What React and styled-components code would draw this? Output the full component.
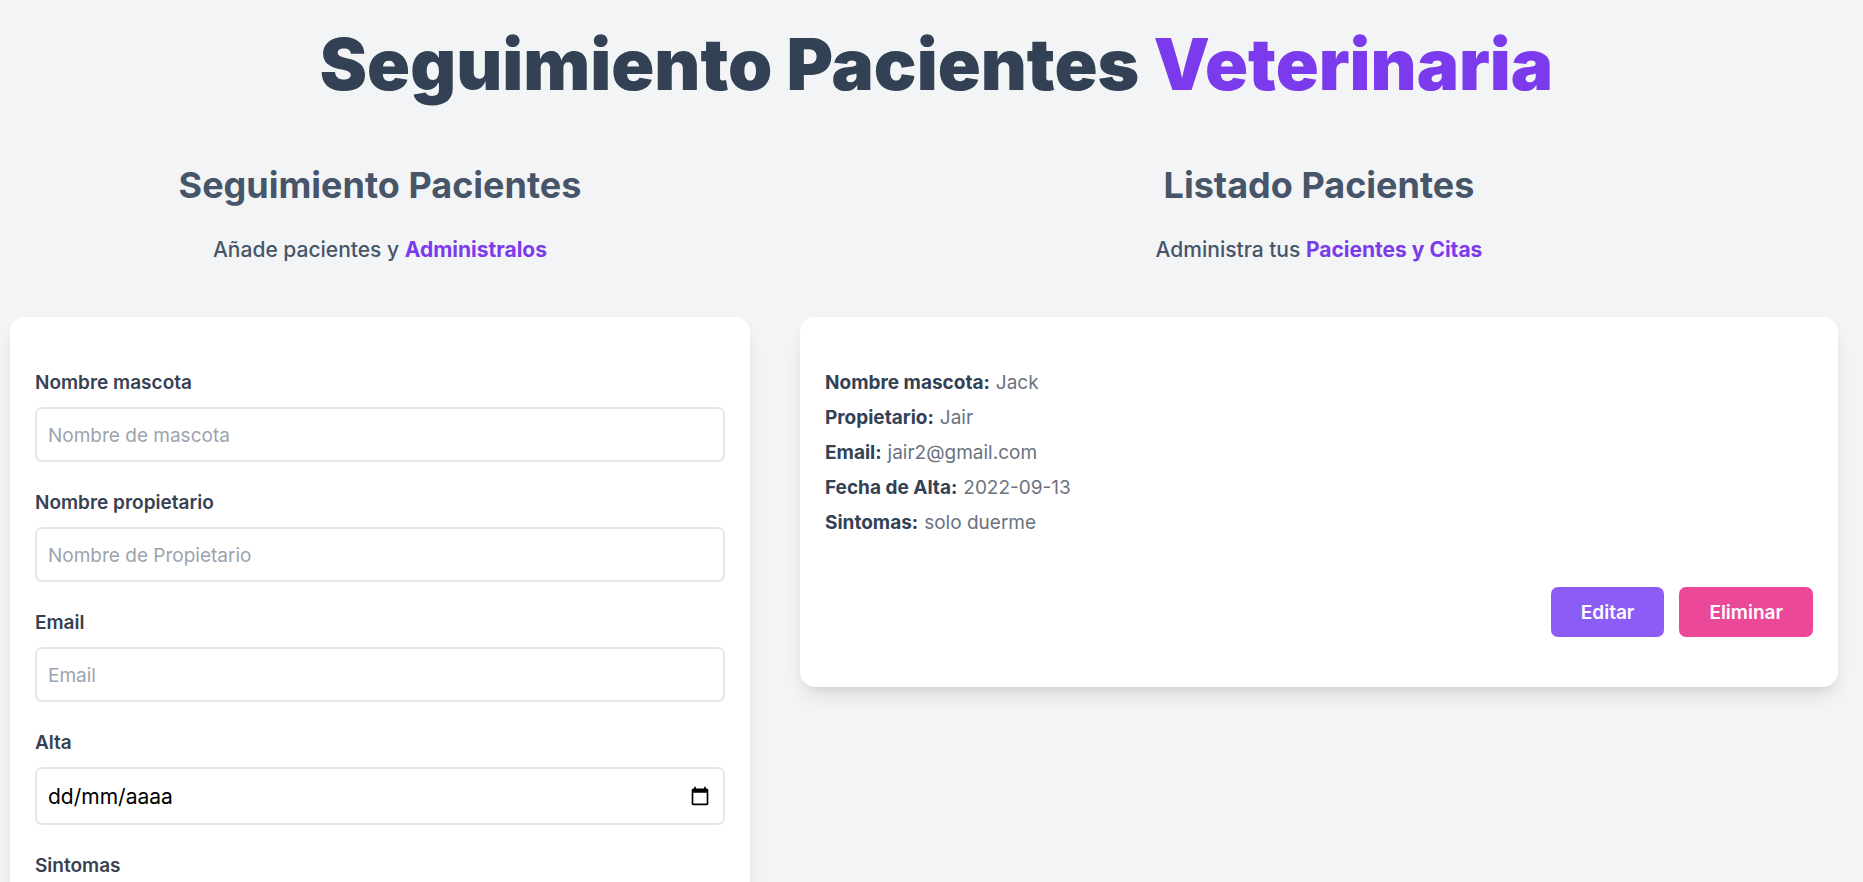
import React from "react";
import styled, { createGlobalStyle } from "styled-components";

const GlobalStyle = createGlobalStyle`
  *, *::before, *::after {
    box-sizing: border-box;
  }

  html {
    scrollbar-width: none;
  }

  body {
    margin: 0;
    background: #f3f4f6;
    font-family: "Inter", "Liberation Sans", sans-serif;
    font-size: 19px;
    line-height: 32px;
    color: #000;
  }

  h1, h2, p, dl, dd {
    margin: 0;
  }

  button, input, textarea {
    font: inherit;
  }
`;

const Page = styled.div`
  padding: 25px 0 50px 10px;
`;

const Title = styled.h1`
  font-size: 71px;
  font-weight: 900;
  line-height: 78px;
  text-align: center;
  color: #334155;
`;

const Accent = styled.span`
  color: #7c3aed;
  font-weight: ${(props) => props.$weight || "inherit"};
`;

const Columns = styled.main`
  display: grid;
  grid-template-columns: minmax(0, 740fr) minmax(0, 1038fr);
  gap: 50px;
  align-items: start;
  margin-top: 59px;
  margin-right: 25px;

  @media (max-width: 800px) {
    grid-template-columns: minmax(0, 1fr);
    margin-right: 10px;
  }
`;

const Heading = styled.h2`
  font-size: 36px;
  font-weight: 700;
  line-height: 47px;
  text-align: center;
  color: #475569;
`;

const Subheading = styled.p`
  margin-top: 23px;
  margin-bottom: 50px;
  font-size: 21px;
  font-weight: 500;
  line-height: 35px;
  text-align: center;
  color: #475569;
`;

const cardShadow = "0 12px 19px -4px rgba(0, 0, 0, 0.1), 0 5px 8px -5px rgba(0, 0, 0, 0.1)";

const Form = styled.form`
  display: flex;
  flex-direction: column;
  gap: 25px;
  padding: 50px 25px;
  border-radius: 15px;
  background: #fff;
  box-shadow: ${cardShadow};
`;

const Field = styled.div`
  display: flex;
  flex-direction: column;
  gap: 8px;
`;

const Label = styled.label`
  font-weight: 600;
  color: #374151;
`;

const Input = styled.input`
  width: 100%;
  height: 55px;
  padding: 2px 11px 0;
  border: 2px solid #e5e7eb;
  border-radius: 7px;
  background: #fff;
  color: #000;

  &::placeholder {
    color: #9ca3af;
    opacity: 1;
  }
`;

const DateBox = styled.div`
  display: flex;
  align-items: center;
  height: 58px;
  padding: 0 13px 0 11px;
  border: 2px solid #e5e7eb;
  border-radius: 7px;
`;

const DateInput = styled.input`
  flex: 1;
  min-width: 0;
  padding: 2px 0 0;
  border: 0;
  background: transparent;
  color: #000;
  font-size: 21px;

  &::placeholder {
    color: #000;
    opacity: 1;
  }
`;

const PickerButton = styled.button`
  display: flex;
  padding: 0;
  border: 0;
  background: transparent;
  color: #000;
  cursor: pointer;
`;

const TextArea = styled.textarea`
  width: 100%;
  height: 85px;
  padding: 10px;
  border: 2px solid #e5e7eb;
  border-radius: 7px;
`;

const PatientCard = styled.article`
  padding: 50px 25px;
  border-radius: 15px;
  background: #fff;
  box-shadow: ${cardShadow};
`;

const Details = styled.dl`
  display: flex;
  flex-direction: column;
  gap: 3px;
`;

const Detail = styled.div`
  display: flex;
  gap: 6px;
  color: #6b7280;

  dt {
    font-weight: 700;
    color: #334155;
  }
`;

const Actions = styled.div`
  display: flex;
  justify-content: flex-end;
  gap: 15px;
  margin-top: 48px;
`;

const ActionButton = styled.button`
  height: 50px;
  padding: 2px 30px 0;
  border: 0;
  border-radius: 7px;
  background: ${(props) => props.$color};
  color: #fff;
  font-weight: 600;
  cursor: pointer;
`;

const fields = [
  { id: "mascota", label: "Nombre mascota", placeholder: "Nombre de mascota", type: "text" },
  { id: "propietario", label: "Nombre propietario", placeholder: "Nombre de Propietario", type: "text" },
  { id: "email", label: "Email", placeholder: "Email", type: "email" },
];

const patient = [
  ["Nombre mascota:", "Jack"],
  ["Propietario:", "Jair"],
  ["Email:", "jair2@gmail.com"],
  ["Fecha de Alta:", "2022-09-13"],
  ["Sintomas:", "solo duerme"],
];

function CalendarIcon() {
  return (
    <svg width="20" height="20" viewBox="0 0 24 24" fill="currentColor" aria-hidden="true">
      <path d="M20 3h-1V1h-2v2H7V1H5v2H4c-1.1 0-2 .9-2 2v16c0 1.1.9 2 2 2h16c1.1 0 2-.9 2-2V5c0-1.1-.9-2-2-2zm0 18H4V8h16v13z" />
    </svg>
  );
}

function PatientForm() {
  return (
    <section>
      <Heading>Seguimiento Pacientes</Heading>
      <Subheading>
        Añade pacientes y <Accent $weight={700}>Administralos</Accent>
      </Subheading>
      <Form>
        {fields.map((field) => (
          <Field key={field.id}>
            <Label htmlFor={field.id}>{field.label}</Label>
            <Input id={field.id} type={field.type} placeholder={field.placeholder} />
          </Field>
        ))}
        <Field>
          <Label htmlFor="alta">Alta</Label>
          <DateBox>
            <DateInput id="alta" type="text" inputMode="numeric" placeholder="dd/mm/aaaa" />
            <PickerButton type="button" aria-label="Abrir calendario">
              <CalendarIcon />
            </PickerButton>
          </DateBox>
        </Field>
        <Field>
          <Label htmlFor="sintomas">Sintomas</Label>
          <TextArea id="sintomas" />
        </Field>
      </Form>
    </section>
  );
}

function PatientList() {
  return (
    <section>
      <Heading>Listado Pacientes</Heading>
      <Subheading>
        Administra tus <Accent $weight={700}>Pacientes y Citas</Accent>
      </Subheading>
      <PatientCard>
        <Details>
          {patient.map(([term, value]) => (
            <Detail key={term}>
              <dt>{term}</dt>
              <dd>{value}</dd>
            </Detail>
          ))}
        </Details>
        <Actions>
          <ActionButton type="button" $color="#8b5cf6">Editar</ActionButton>
          <ActionButton type="button" $color="#ec4899">Eliminar</ActionButton>
        </Actions>
      </PatientCard>
    </section>
  );
}

export default function App() {
  return (
    <>
      <GlobalStyle />
      <Page>
        <Title>
          Seguimiento Pacientes <Accent>Veterinaria</Accent>
        </Title>
        <Columns>
          <PatientForm />
          <PatientList />
        </Columns>
      </Page>
    </>
  );
}
